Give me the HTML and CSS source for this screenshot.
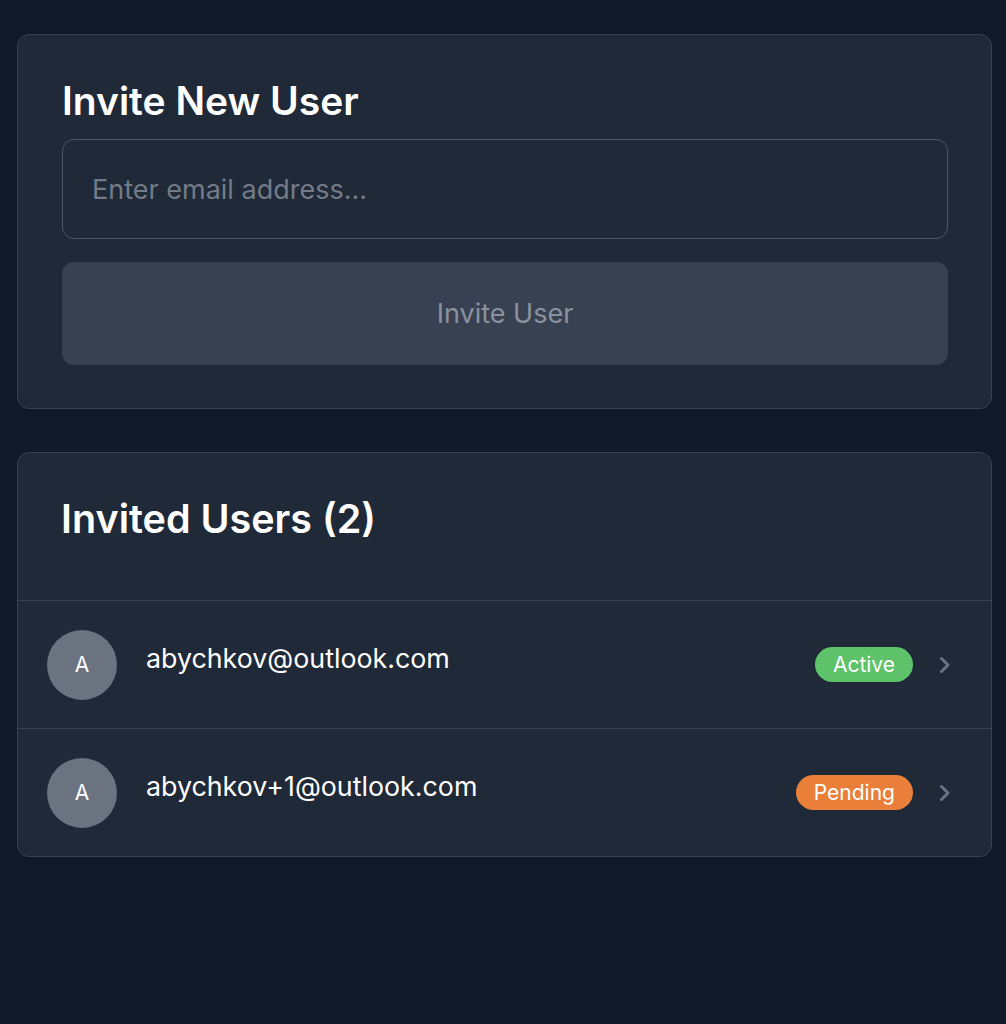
FILE: index.html
```html
<!DOCTYPE html>
<html lang="en">
<head>
<meta charset="utf-8">
<title>Invite Users</title>
<link rel="stylesheet" href="styles.css">
</head>
<body>
<main class="page">
  <section class="card invite-card">
    <h1 class="card-title">Invite New User</h1>
    <input class="email-input" type="email" placeholder="Enter email address...">
    <button class="invite-btn" type="button">Invite User</button>
  </section>

  <section class="card users-card">
    <div class="users-header">
      <h2 class="card-title">Invited Users (2)</h2>
    </div>
    <ul class="user-list">
      <li class="user-row">
        <div class="avatar">A</div>
        <div class="user-email">abychkov@outlook.com</div>
        <span class="badge badge-active">Active</span>
        <svg class="chevron" width="12" height="18" viewBox="0 0 12 18"><path d="M2.5 2.5 L9 9 L2.5 15.5" fill="none" stroke="#6b7280" stroke-width="3" stroke-linecap="round" stroke-linejoin="round"/></svg>
      </li>
      <li class="user-row">
        <div class="avatar">A</div>
        <div class="user-email">abychkov+1@outlook.com</div>
        <span class="badge badge-pending">Pending</span>
        <svg class="chevron" width="12" height="18" viewBox="0 0 12 18"><path d="M2.5 2.5 L9 9 L2.5 15.5" fill="none" stroke="#6b7280" stroke-width="3" stroke-linecap="round" stroke-linejoin="round"/></svg>
      </li>
    </ul>
  </section>
</main>
</body>
</html>
```

FILE: styles.css
```css
* {
  box-sizing: border-box;
}

html, body {
  margin: 0;
  background: #111827;
}

body {
  font-family: Inter, "Noto Sans", "Liberation Sans", sans-serif;
  color: #ffffff;
  min-height: 1024px;
}

.page {
  padding: 34px 14px 40px 17px;
  display: flex;
  flex-direction: column;
  gap: 43px;
}

.card {
  background: #1f2937;
  border: 1px solid #374151;
  border-radius: 12px;
}

.card-title {
  margin: 0;
  font-size: 39px;
  line-height: 44px;
  font-weight: 600;
  color: #ffffff;
}

.users-header .card-title {
  font-size: 39.5px;
}

.invite-card {
  padding: 44px 43px 43px 44px;
  display: flex;
  flex-direction: column;
}

.email-input {
  margin-top: 16px;
  height: 100px;
  border: 1px solid #4b5563;
  border-radius: 12px;
  background: transparent;
  padding: 0 29px;
  font-family: inherit;
  font-size: 27px;
  color: #ffffff;
  outline: none;
}

.email-input::placeholder {
  color: #737b89;
}

.invite-btn {
  margin-top: 23px;
  height: 103px;
  border: none;
  border-radius: 12px;
  background: #374151;
  color: #8b929e;
  font-family: inherit;
  font-size: 27px;
  font-weight: 400;
}

.users-header {
  padding: 44px 44px 0 43px;
  height: 147px;
}

.user-list {
  list-style: none;
  margin: 0;
  padding: 0;
}

.user-row {
  display: flex;
  align-items: center;
  height: 128px;
  border-top: 1px solid #374151;
  padding: 0 40px 0 29px;
}

.avatar {
  width: 70px;
  height: 70px;
  border-radius: 50%;
  background: #6b7280;
  color: #ffffff;
  display: flex;
  align-items: center;
  justify-content: center;
  font-size: 21px;
  font-weight: 400;
  flex: none;
}

.user-email {
  flex: 1;
  margin-left: 29px;
  margin-bottom: 14px;
  font-size: 26.8px;
  line-height: 30px;
  color: #ffffff;
}

.badge {
  height: 35px;
  border-radius: 18px;
  padding: 0 18px;
  font-size: 21px;
  line-height: 35px;
  font-weight: 400;
  color: #ffffff;
  flex: none;
}

.badge-active {
  background: #5ec26a;
}

.badge-pending {
  background: #e97f39;
}

.chevron {
  margin-left: 26px;
  flex: none;
}
```
